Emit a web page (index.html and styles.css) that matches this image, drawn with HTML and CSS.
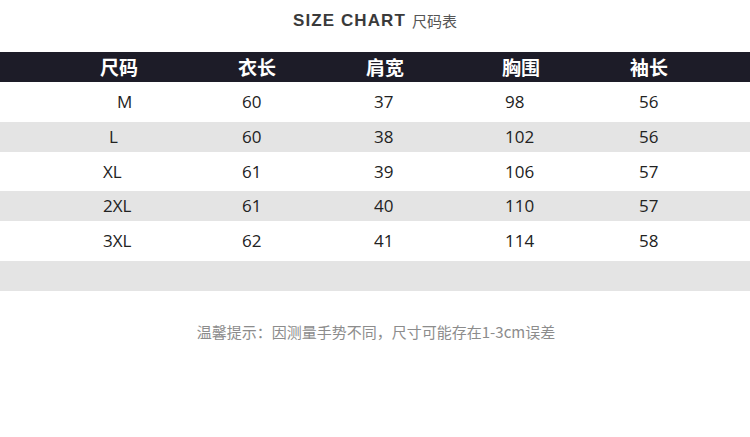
FILE: index.html
```html
<!DOCTYPE html>
<html lang="zh-CN">
<head>
<meta charset="utf-8">
<title>Size Chart</title>
<link rel="stylesheet" href="styles.css">
</head>
<body>
<div class="page">
  <h1 class="title"><span class="title-en">SIZE CHART</span><span class="title-zh">尺码表</span></h1>
  <div class="table">
    <div class="row head">
      <div class="cell">尺码</div><div class="cell">衣长</div><div class="cell">肩宽</div><div class="cell">胸围</div><div class="cell">袖长</div>
    </div>
    <div class="row tall">
      <div class="cell size-m">M</div><div class="cell">60</div><div class="cell">37</div><div class="cell">98</div><div class="cell">56</div>
    </div>
    <div class="row short alt">
      <div class="cell size-l">L</div><div class="cell">60</div><div class="cell">38</div><div class="cell">102</div><div class="cell">56</div>
    </div>
    <div class="row tall">
      <div class="cell">XL</div><div class="cell">61</div><div class="cell">39</div><div class="cell">106</div><div class="cell">57</div>
    </div>
    <div class="row short alt">
      <div class="cell">2XL</div><div class="cell">61</div><div class="cell">40</div><div class="cell">110</div><div class="cell">57</div>
    </div>
    <div class="row tall">
      <div class="cell">3XL</div><div class="cell">62</div><div class="cell">41</div><div class="cell">114</div><div class="cell">58</div>
    </div>
    <div class="row short alt empty"></div>
  </div>
  <p class="note">温馨提示：因测量手势不同，尺寸可能存在1-3cm误差</p>
</div>
</body>
</html>
```
FILE: styles.css
```css
html, body {
  margin: 0;
  padding: 0;
  background: #ffffff;
}
.page {
  width: 750px;
  height: 437px;
  overflow: hidden;
}
.title {
  margin: 0;
  height: 52px;
  display: flex;
  justify-content: center;
  align-items: flex-start;
  padding-left: 0;
  box-sizing: border-box;
  padding-top: 10px;
  gap: 6px;
  line-height: 22px;
}
.title-en {
  font-family: "Liberation Sans", Arial, sans-serif;
  font-weight: 700;
  font-size: 17px;
  letter-spacing: 1.1px;
  color: #3a3a3a;
}
.title-zh {
  font-family: "Noto Sans CJK SC", sans-serif;
  font-weight: 400;
  font-size: 15px;
  color: #555555;
}
.table {
  display: flex;
  flex-direction: column;
}
.row {
  display: grid;
  grid-template-columns: 138px 128px 134px 130px 120px;
  padding-left: 100px;
  align-items: center;
  font-family: "Open Sans", "Noto Sans CJK SC", sans-serif;
  font-size: 17px;
  color: #222222;
}
.row.head {
  height: 30px;
  background: #1d1c28;
  color: #ffffff;
  font-family: "Noto Sans CJK SC", sans-serif;
  font-weight: 700;
  font-size: 19px;
  line-height: 30px;
}
.row.tall { height: 39px; }
.row.tall:nth-child(2) { height: 40px; }
.row.tall:nth-child(6) { height: 40px; }
.row.short { height: 30px; }
.row.alt { background: #e4e4e4; }
.row .cell { line-height: 24px; white-space: nowrap; }
.row.head .cell { line-height: 30px; }
.row.head .cell:nth-child(4) { padding-left: 2px; }
.row:not(.head) .cell:nth-child(1) { padding-left: 3px; }
.row:not(.head) .cell:nth-child(2) { padding-left: 4px; }
.row:not(.head) .cell:nth-child(3) { padding-left: 8px; }
.row:not(.head) .cell:nth-child(4) { padding-left: 5px; }
.row:not(.head) .cell:nth-child(5) { padding-left: 9px; }
.row:not(.head) .cell.size-m { padding-left: 17px; }
.row:not(.head) .cell.size-l { padding-left: 9px; }
.note {
  margin: 30px 0 0;
  text-align: center;
  font-family: "Noto Sans CJK SC", sans-serif;
  font-size: 15px;
  color: #8c8c8c;
  line-height: 22px;
  padding-left: 2px;
}
```
